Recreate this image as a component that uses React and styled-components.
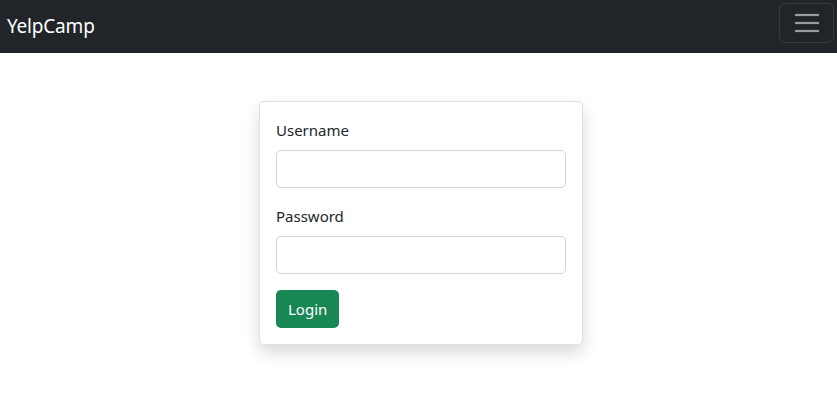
import React from 'react';
import styled, { createGlobalStyle } from 'styled-components';

const GlobalStyle = createGlobalStyle`
    * { box-sizing: border-box; }
    html, body {
        margin: 0;
        background: #fff;
    }
    body {
        font-family: "Noto Sans", "Open Sans", sans-serif;
        color: #212529;
    }
`;

const Page = styled.div`
    min-height: 413px;
`;

const Navbar = styled.nav`
    height: 53px;
    background: #212529;
    display: flex;
    align-items: center;
    justify-content: space-between;
    padding: 0 3px 0 7px;
`;

const Brand = styled.a`
    color: #fff;
    font-size: 19px;
    text-decoration: none;
    letter-spacing: -0.2px;
    margin-top: -2px;
`;

const Toggler = styled.button`
    width: 55px;
    height: 40px;
    margin-top: -8px;
    background: transparent;
    border: 1px solid rgba(255, 255, 255, 0.1);
    border-radius: 6px;
    display: flex;
    align-items: center;
    justify-content: center;
    padding: 0;
`;

const Main = styled.main`
    display: flex;
    justify-content: center;
    padding: 48px 0 48px 5px;
`;

const Card = styled.div`
    width: 324px;
    background: #fff;
    border: 1px solid rgba(0, 0, 0, 0.12);
    border-radius: 5px;
    box-shadow: 0 8px 16px rgba(0, 0, 0, 0.15);
    padding: 16px;
`;

const Field = styled.div`
    margin-bottom: 16px;
`;

const Label = styled.label`
    display: block;
    font-size: 15px;
    line-height: 24px;
    margin-bottom: 8px;
`;

const Input = styled.input`
    display: block;
    width: 100%;
    height: 38px;
    border: 1px solid #ced4da;
    border-radius: 5px;
    font-size: 16px;
    padding: 6px 12px;
`;

const Button = styled.button`
    height: 38px;
    padding: 0 12px;
    border: none;
    border-radius: 5px;
    background: #198754;
    color: #fff;
    font-family: inherit;
    font-size: 15px;
`;

const MenuIcon = () => (
    <svg width="26" height="22" viewBox="0 0 26 22">
        <g stroke="rgba(255,255,255,0.55)" strokeWidth="2.2" strokeLinecap="butt">
            <line x1="1" y1="3" x2="25" y2="3" />
            <line x1="1" y1="11" x2="25" y2="11" />
            <line x1="1" y1="19" x2="25" y2="19" />
        </g>
    </svg>
);

const App = () => (
    <Page>
        <GlobalStyle />
        <Navbar>
            <Brand href="#">YelpCamp</Brand>
            <Toggler aria-label="Toggle navigation">
                <MenuIcon />
            </Toggler>
        </Navbar>
        <Main>
            <Card>
                <Field>
                    <Label htmlFor="username">Username</Label>
                    <Input id="username" type="text" />
                </Field>
                <Field>
                    <Label htmlFor="password">Password</Label>
                    <Input id="password" type="password" />
                </Field>
                <Button>Login</Button>
            </Card>
        </Main>
    </Page>
);

export default App;
